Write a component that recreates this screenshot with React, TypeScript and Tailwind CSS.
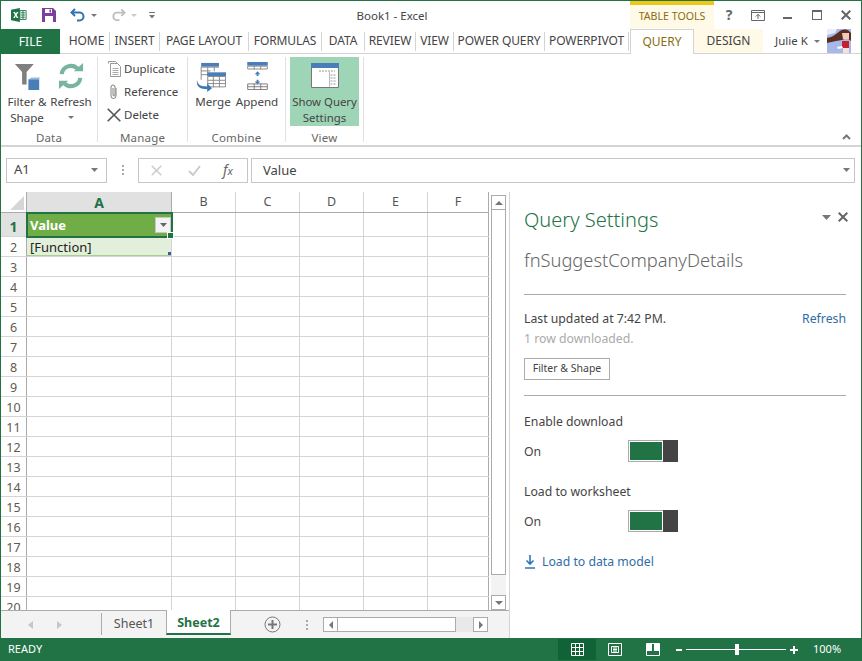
function Sep() {
  return <div className="w-px h-[19px] bg-[#d4d4d4]" />;
}

function Tab({ label, w, extra }: { label: string; w: string; extra?: string }) {
  return <div className={`${w} ${extra ?? ""} flex items-center justify-center h-full text-[#444] tracking-[-0.1px]`}>{label}</div>;
}

function ExcelLogo() {
  return (
    <svg width="18" height="16" viewBox="0 0 18 16">
      <path d="M10 3h7v10h-7z" fill="#fff" stroke="#217346" />
      <path d="M11 5.5h5M11 8h5M11 10.5h5M13.5 3v10" stroke="#217346" strokeWidth="1" />
      <path d="M0 2l10-2v16L0 14z" fill="#217346" />
      <path d="M2.5 4.5h2l1 2.2 1-2.2h1.9l-2 3.5 2 3.5H6.4l-1-2.3-1 2.3H2.5l2-3.5z" fill="#fff" />
    </svg>
  );
}

function TitleBar() {
  return (
    <div className="flex h-[28px] items-stretch">
      <div className="w-[10px]" />
      <div className="flex items-center w-[16px]"><ExcelLogo /></div>
      <div className="w-[15px]" />
      <div className="flex items-center">
        <svg width="14" height="14" viewBox="0 0 14 14">
          <path d="M0 0h11l3 3v11H0z" fill="#7a3f9e" />
          <path d="M3 1h7v4H3z" fill="#fff" />
          <path d="M3 8h8v6H3z" fill="#fff" />
          <path d="M7.5 1.5H9v3H7.5z" fill="#7a3f9e" />
        </svg>
      </div>
      <div className="w-[14px]" />
      <div className="flex items-center gap-[5px]">
        <svg width="16" height="14" viewBox="0 0 16 14" fill="none">
          <path d="M5 1L1.5 4.5 5 8" stroke="#2f75b5" strokeWidth="2" />
          <path d="M2 4.5h7.5a4 4 0 0 1 0 8H7" stroke="#2f75b5" strokeWidth="2" />
        </svg>
        <svg width="6" height="3" viewBox="0 0 6 3"><path d="M0 0h6L3 3z" fill="#777" /></svg>
      </div>
      <div className="w-[14px]" />
      <div className="flex items-center gap-[5px]">
        <svg width="15" height="14" viewBox="0 0 16 14" fill="none">
          <path d="M11 1l3.5 3.5L11 8" stroke="#bdbdbd" strokeWidth="2" />
          <path d="M14 4.5H6.5a4 4 0 0 0 0 8H9" stroke="#bdbdbd" strokeWidth="2" />
        </svg>
        <svg width="6" height="3" viewBox="0 0 6 3"><path d="M0 0h6L3 3z" fill="#c9c9c9" /></svg>
      </div>
      <div className="w-[12px]" />
      <div className="flex items-center">
        <svg width="6" height="7" viewBox="0 0 6 7"><path d="M0 0h6v1H0zM0 3h6L3 6.5z" fill="#777" /></svg>
      </div>
      <div className="w-[202px]" />
      <div className="w-[70px] flex items-center justify-center text-[#444] text-[11.5px] whitespace-nowrap pt-[2px]">Book1 - Excel</div>
      <div className="w-[203px]" />
      <div className="w-[84px] bg-[#fff9e7] border-t-[4px] border-[#eec717] flex items-center justify-center text-[#8a6d0f] text-[10.6px] whitespace-nowrap">TABLE TOOLS</div>
      <div className="flex-1 flex items-center">
        <div className="w-[10px]" />
        <span className="w-[10px] text-[#666] font-bold text-[14px] leading-none text-center">?</span>
        <div className="w-[17px]" />
        <svg width="14" height="11" viewBox="0 0 14 11" fill="none"><path d="M.5.5h13v10H.5zM1 2.5h12" stroke="#666" /><path d="M7 9V4.5M4.8 6.5L7 4.3l2.2 2.2" stroke="#666" /></svg>
        <div className="w-[18px]" />
        <div className="w-[9px] h-[2px] mt-[6px] bg-[#666]" />
        <div className="w-[20px]" />
        <div className="w-[10px] h-[10px] border border-t-2 border-[#666]" />
        <div className="w-[19px]" />
        <svg width="10" height="10" viewBox="0 0 10 10"><path d="M.7.7l8.6 8.6M9.3.7L.7 9.3" stroke="#666" strokeWidth="2" /></svg>
      </div>
    </div>
  );
}

function Avatar() {
  return (
    <svg width="24" height="24" viewBox="0 0 24 24" className="shrink-0">
      <rect width="24" height="24" fill="#a8b8ea" />
      <path d="M0 0h10L8 4 0 6z" fill="#e8ecfa" />
      <path d="M0 9c6-1 9-4 13-7 3-2 7-2 9 0l2 2v8l-4-3-5 2-6 1-9 2z" fill="#5a2f22" />
      <path d="M15 4h7v6h-6z" fill="#f2cdb4" />
      <path d="M15 12h7v7h-7z" fill="#c8202a" />
      <path d="M16 19h6v5h-6z" fill="#f4e3dc" />
      <path d="M10 18l5-1 1 2-5 1z" fill="#fff" />
    </svg>
  );
}

function TabStrip() {
  return (
    <div className="flex h-[25px] items-stretch border-b border-[#d4d4d4]">
      <div className="w-[59px] bg-[#217346] text-white flex items-center justify-center mb-[-1px]">FILE</div>
      <div className="flex items-center">
        <Tab label="HOME" w="w-[49px]" extra="pl-[4px]" />
        <Sep />
        <Tab label="INSERT" w="w-[49px]" />
        <Sep />
        <Tab label="PAGE LAYOUT" w="w-[88px]" />
        <Sep />
        <Tab label="FORMULAS" w="w-[72px]" />
        <Sep />
        <Tab label="DATA" w="w-[42px]" />
        <Sep />
        <Tab label="REVIEW" w="w-[50px]" />
        <Sep />
        <Tab label="VIEW" w="w-[37px]" />
        <Sep />
        <Tab label="POWER QUERY" w="w-[90px]" />
        <Sep />
        <Tab label="POWERPIVOT" w="w-[83px]" />
        <Sep />
      </div>
      <div className="w-[1px]" />
      <div className="w-[64px] border border-b-0 border-[#d4d4d4] bg-white mb-[-1px] flex items-center justify-center text-[#8a6d0f]">QUERY</div>
      <div className="w-[69px] bg-[#fff9e7] flex items-center justify-center text-[#444]">DESIGN</div>
      <div className="w-[12px]" />
      <div className="w-[33px] flex items-center text-[#444] text-[11.5px] whitespace-nowrap">Julie K</div>
      <div className="w-[12px] flex items-center justify-end">
        <svg width="6" height="3" viewBox="0 0 6 3"><path d="M0 0h6L3 3z" fill="#777" /></svg>
      </div>
      <div className="w-[7px]" />
      <Avatar />
    </div>
  );
}

function Group({ label, w, children }: { label: string; w: string; children: React.ReactNode }) {
  return (
    <div className={`${w} flex flex-col border-r border-[#e1e1e1] mt-[3px] mb-[3px]`}>
      <div className="flex-1 flex min-h-0">{children}</div>
      <div className="h-[16px] -mb-[4px] shrink-0 flex items-center justify-center text-[#666] text-[11.5px] tracking-[0.2px]">{label}</div>
    </div>
  );
}

function MenuRow({ icon, label }: { icon: React.ReactNode; label: string }) {
  return (
    <div className="h-[23px] shrink-0 flex items-center text-[#444] text-[11.5px]">
      <div className="w-[18px] flex justify-center">{icon}</div>
      <span className="ml-[1px]">{label}</span>
    </div>
  );
}

function Ribbon() {
  return (
    <div className="h-[93px] flex border-b-2 border-[#d4d4d4] bg-white text-[11.6px]">
      <Group label="Data" w="w-[97px]">
        <div className="w-[50px] flex flex-col items-center text-[#444] leading-[16px] pl-[2px]">
          <svg width="27" height="27" viewBox="0 0 30 30" className="mt-[6px] shrink-0">
            <path d="M1 1h21l-8 9v14h-5V10z" fill="#7f7f7f" />
            <path d="M16 18h12v12H16z" fill="#4a7eb8" />
            <path d="M19 16h10l-1 2H17z" fill="#9dbbdd" />
          </svg>
          <div className="mt-[4px] text-center whitespace-nowrap">Filter &amp;<br />Shape</div>
        </div>
        <div className="w-[40px] flex flex-col items-center text-[#444] leading-[16px]">
          <svg width="26" height="26" viewBox="0 0 28 28" fill="none" className="mt-[6px] shrink-0">
            <path d="M4 12a10 10 0 0 1 17-6" stroke="#77b59e" strokeWidth="4.5" />
            <path d="M17 9h10V0z" fill="#77b59e" />
            <path d="M24 16a10 10 0 0 1-17 6" stroke="#77b59e" strokeWidth="4.5" />
            <path d="M11 19H1v9z" fill="#77b59e" />
          </svg>
          <div className="mt-[5px] whitespace-nowrap">Refresh</div>
          <svg width="6" height="3" viewBox="0 0 6 3" className="mt-[6px] shrink-0"><path d="M0 0h6L3 3z" fill="#777" /></svg>
        </div>
      </Group>
      <Group label="Manage" w="w-[90px]">
        <div className="flex flex-col pl-[7px]">
          <MenuRow label="Duplicate" icon={
            <svg width="13" height="16" viewBox="0 0 13 16" fill="none"><path d="M.5 2.5V.5h7l3 3v1" stroke="#999" /><path d="M2.5 2.5h7l3 3v10h-10z" fill="#fff" stroke="#999" /><path d="M4.5 7.5h6M4.5 9.500h6M4.5 11.500h6M4.5 13.500h6" stroke="#aaa" /></svg>
          } />
          <MenuRow label="Reference" icon={
            <svg width="8" height="16" viewBox="0 0 8 16" fill="none"><path d="M6 4v8a2.500 2.500 0 0 1-5 0V3a2 2 0 0 1 4 0v8a1 1 0 0 1-2 0V4" stroke="#808080" /></svg>
          } />
          <MenuRow label="Delete" icon={
            <svg width="14" height="14" viewBox="0 0 14 14"><path d="M.7.7l12.600 12.600M13.300.7L.7 13.300" stroke="#555" strokeWidth="1.6" /></svg>
          } />
        </div>
      </Group>
      <Group label="Combine" w="w-[98px]">
        <div className="w-[48px] flex flex-col items-center text-[#444] leading-[16px] pl-[2px]">
          <svg width="30" height="30" viewBox="0 0 32 32" fill="none" className="mt-[5px] -ml-[4px] shrink-0">
            <path d="M5.5 1h19v4h-19z" fill="#4a7eb8" />
            <path d="M5.5 5.500h19M5.500 9.500h10M5.500 13.500h8M5.500 5v14M12.500 5v10M19.500 5v5" stroke="#888" />
            <path d="M12 11h20v4H12z" fill="#4a7eb8" />
            <path d="M12.5 15.500h19v11h-19zM12.500 19.500h19M12.500 23h19M18.500 15v12M25 15v12" stroke="#888" />
            <path d="M1 19c1 7 6 7 11 7v-3l5 5-5 4v-3C5 29 0 27 1 19z" fill="#3d77b6" />
          </svg>
          <div className="mt-[2px]">Merge</div>
        </div>
        <div className="w-[42px] flex flex-col items-center text-[#444] leading-[16px]">
          <svg width="21" height="28" viewBox="0 0 22 30" fill="none" className="mt-[5px] shrink-0">
            <path d="M0 0h22v4H0z" fill="#4a7eb8" />
            <path d="M.5 4.500h21v3H.5zM7.500 4v4M14.500 4v4" stroke="#888" />
            <path d="M11 10l3 3h-2v2h-2v-2H8zM11 24l3-3h-2v-2h-2v2H8z" fill="#4a7eb8" />
            <path d="M.5 23.500h21v6H.5zM.5 26.500h21M7.500 23v7M14.500 23v7" stroke="#777" />
          </svg>
          <div className="mt-[4px] whitespace-nowrap">Append</div>
        </div>
      </Group>
      <Group label="View" w="w-[78px]">
        <div className="w-[69px] h-[69px] ml-[4px] bg-[#9fd5b7] flex flex-col items-center text-[#444] leading-[16px]">
          <svg width="28" height="25" viewBox="0 0 28 25" fill="none" className="mt-[6px] shrink-0">
            <path d="M.5.5h27v24H.5z" fill="#fff" stroke="#777" />
            <path d="M0 0h28v5H0z" fill="#4a7eb8" />
            <path d="M8 8h16M19.500 12h6M19.500 15h6M19.500 18h6M19.500 21h6" stroke="#999" strokeDasharray="2 1" />
            <path d="M18.5 9v15" stroke="#bbb" />
          </svg>
          <div className="mt-[6px] text-center whitespace-nowrap text-[11.4px]">Show Query<br />Settings</div>
        </div>
      </Group>
      <div className="flex-1 flex items-end justify-end pb-[5px] pr-[10px]">
        <svg width="9" height="6" viewBox="0 0 9 6" fill="none"><path d="M1 5l3.5-3.500L8 5" stroke="#777" strokeWidth="2" /></svg>
      </div>
    </div>
  );
}

function FormulaBar() {
  return (
    <div className="h-[45px] flex items-center pl-[5px] pr-[6px] pt-[1px]">
      <div className="w-[101px] h-[25px] border border-[#c6c6c6] flex items-center justify-between pl-[7px] pr-[8px] text-[#444] text-[13px]">
        <span>A1</span>
        <svg width="7" height="4" viewBox="0 0 7 4"><path d="M0 0h7L3.5 4z" fill="#777" /></svg>
      </div>
      <div className="w-[31px] flex flex-col items-center gap-[2px]">
        <div className="w-[2px] h-[2px] bg-[#aaa]" />
        <div className="w-[2px] h-[2px] bg-[#aaa]" />
        <div className="w-[2px] h-[2px] bg-[#aaa]" />
      </div>
      <div className="w-[110px] h-[25px] border border-[#c6c6c6] flex items-center">
        <svg width="11" height="11" viewBox="0 0 11 11" className="ml-[12px]"><path d="M.7.7l9.600 9.600M10.300.7L.7 10.300" stroke="#ccc" strokeWidth="1.6" /></svg>
        <svg width="13" height="11" viewBox="0 0 13 11" fill="none" className="ml-[26px]"><path d="M1 6l4 4 7-9" stroke="#ccc" strokeWidth="2" /></svg>
        <span className="ml-[22px] text-[#666] text-[14px] italic font-['Liberation_Serif',serif] leading-none">f<span className="text-[11px]">x</span></span>
      </div>
      <div className="w-[3px]" />
      <div className="flex-1 h-[25px] border border-[#c6c6c6] flex items-center justify-between pl-[11px] pr-[4px] text-[#444] text-[13px]">
        <span className="pt-[1px]">Value</span>
        <svg width="7" height="4" viewBox="0 0 7 4"><path d="M0 0h7L3.5 4z" fill="#777" /></svg>
      </div>
    </div>
  );
}

const otherCols = [
  { label: "B", cls: "w-[64px] border-[#d4d4d4]" },
  { label: "C", cls: "w-[64px] border-[#d4d4d4]" },
  { label: "D", cls: "w-[64px] border-[#d4d4d4]" },
  { label: "E", cls: "w-[64px] border-[#d4d4d4]" },
  { label: "F", cls: "w-[61px] border-[#ababab]" },
];

function Row({ n }: { n: number }) {
  return (
    <div className="flex h-[20px] shrink-0 border-b border-[#d4d4d4]">
      <div className="w-[26px] bg-white border-r border-[#ababab] flex items-center justify-center pt-[3px] text-[12.5px] text-[#5f5a4e]">
        {n}
      </div>
      <div className={`w-[145px] border-r border-[#d4d4d4] ${n === 2 ? "bg-[#e2efda] border-b border-b-[#a9d08e] relative flex items-center pl-[3px] pt-[3px] text-[13px] text-[#222]" : ""}`}>
        {n === 2 && "[Function]"}
        {n === 2 && <div className="absolute right-0 bottom-0 w-[3px] h-[3px] bg-[#3a58a8]" />}
      </div>
      {otherCols.map((c) => (
        <div key={c.label} className={`${c.cls} border-r`} />
      ))}
    </div>
  );
}

function Sheet() {
  const rows = [];
  for (let i = 2; i <= 20; i++) rows.push(i);
  return (
    <div className="flex-1 flex flex-col min-h-0 overflow-hidden">
      <div className="flex h-[21px] shrink-0 border-b border-[#ababab]">
        <div className="w-[26px] bg-white border-r border-[#ababab] flex items-end justify-end p-[2px]">
          <svg width="14" height="14" viewBox="0 0 14 14"><path d="M14 0v14H0z" fill="#d6d6d6" /></svg>
        </div>
        <div className="w-[145px] bg-[#e1e1e1] border-r border-[#ababab] flex items-center justify-center font-bold text-[#217346] text-[14px]">A</div>
        {otherCols.map((c) => (
          <div key={c.label} className={`${c.cls} border-r flex items-center justify-center text-[#555] text-[12.5px]`}>{c.label}</div>
        ))}
      </div>
      <div className="flex h-[24px] shrink-0 border-b border-[#d4d4d4]">
        <div className="w-[26px] bg-[#e1e1e1] border-r border-[#ababab] flex items-center justify-center pt-[3px] font-bold text-[#217346] text-[14px]">1</div>
        <div className="w-[147px] h-[26px] relative z-10 bg-[#70ad47] border-2 border-[#217346] flex items-center justify-between text-white font-bold text-[13px] pl-[2px] ml-[-1px] mt-[-1px]">
          <span className="pt-[1px]">Value</span>
          <div className="w-[16px] h-[16px] bg-[#f3f3f3] border border-[#c6c6c6] flex items-center justify-center">
            <svg width="7" height="4" viewBox="0 0 7 4"><path d="M0 0h7L3.5 4z" fill="#666" /></svg>
          </div>
          <div className="absolute right-[-3px] bottom-[-3px] w-[5px] h-[5px] bg-[#217346] border border-white box-content" />
        </div>
        {otherCols.map((c) => (
          <div key={c.label} className={`${c.cls} border-r ${c.label === "B" ? "ml-[-1px]" : ""}`} />
        ))}
      </div>
      {rows.map((n) => (
        <Row key={n} n={n} />
      ))}
    </div>
  );
}

function VScroll() {
  return (
    <div className="w-[15px] pt-[3px] flex flex-col">
      <div className="h-[15px] shrink-0 bg-white border border-[#ababab] flex items-center justify-center">
        <svg width="8" height="4" viewBox="0 0 8 4"><path d="M4 0l4 4H0z" fill="#777" /></svg>
      </div>
      <div className="h-[365px] shrink-0 bg-white border border-t-0 border-[#ababab]" />
      <div className="flex-1 bg-[#f3f3f3]" />
      <div className="h-[15px] shrink-0 bg-white border border-[#ababab] flex items-center justify-center">
        <svg width="8" height="4" viewBox="0 0 8 4"><path d="M0 0h8L4 4z" fill="#777" /></svg>
      </div>
    </div>
  );
}

function SheetTabs() {
  return (
    <div className="h-[28px] shrink-0 bg-[#f3f3f3] border-t border-[#ababab] flex items-stretch">
      <div className="w-[100px] flex items-center pl-[27px] gap-[24px]">
        <svg width="5" height="8" viewBox="0 0 5 8"><path d="M5 0v8L0 4z" fill="#c6c6c6" /></svg>
        <svg width="5" height="8" viewBox="0 0 5 8"><path d="M0 0v8l5-4z" fill="#c6c6c6" /></svg>
      </div>
      <div className="w-[65px] border-l border-[#ababab] mt-[2px] mb-[3px] pt-[1px] flex items-center justify-center text-[#555] text-[12.5px]">Sheet1</div>
      <div className="w-[65px] mt-[-1px] mb-[3px] pt-[3px] bg-white border-x border-[#ababab] border-b-2 border-b-[#217346] flex items-center justify-center font-bold text-[#217346] text-[12.5px]">Sheet2</div>
      <div className="w-[33px]" />
      <div className="flex items-center">
        <svg width="17" height="17" viewBox="0 0 17 17" fill="none"><circle cx="8.5" cy="8.5" r="7.5" stroke="#777" /><path d="M8.5 4v9M4 8.5h9" stroke="#777" strokeWidth="2" /></svg>
      </div>
      <div className="w-[19px]" />
      <div className="w-[10px] flex flex-col items-center justify-center gap-[2px] ml-[2px]">
        <div className="w-[2px] h-[2px] bg-[#aaa]" />
        <div className="w-[2px] h-[2px] bg-[#aaa]" />
        <div className="w-[2px] h-[2px] bg-[#aaa]" />
      </div>
      <div className="w-[11px]" />
      <div className="flex items-center">
        <div className="w-[15px] h-[15px] bg-white border border-[#ababab] flex items-center justify-center">
          <svg width="4" height="8" viewBox="0 0 4 8"><path d="M4 0v8L0 4z" fill="#777" /></svg>
        </div>
        <div className="w-[118px] h-[15px] bg-white border border-l-0 border-[#ababab]" />
        <div className="w-[17px] h-[15px] bg-[#e9e9e9]" />
        <div className="w-[15px] h-[15px] bg-white border border-[#ababab] flex items-center justify-center">
          <svg width="4" height="8" viewBox="0 0 4 8"><path d="M0 0v8l4-4z" fill="#777" /></svg>
        </div>
      </div>
    </div>
  );
}

function Toggle() {
  return (
    <div className="w-[50px] h-[22px] border border-[#ababab] flex">
      <div className="flex-1 m-px bg-[#217346]" />
      <div className="w-[15px] bg-[#444] my-[-1px] mr-[-1px]" />
    </div>
  );
}

function QueryPanel() {
  return (
    <div className="flex-1 flex flex-col pl-[14px] pr-[15px] text-[#444] text-[12.25px]">
      <div className="flex items-start justify-between h-[48px] pt-[13px]">
        <div className="text-[20px] leading-[30px] text-[#217346] font-light">Query Settings</div>
        <div className="flex items-center gap-[7px] pt-[7px] -mr-[2px]">
          <svg width="9" height="5" viewBox="0 0 9 5"><path d="M0 0h9L4.5 5z" fill="#777" /></svg>
          <svg width="10" height="10" viewBox="0 0 10 10"><path d="M.7.7l8.6 8.6M9.3.7L.7 9.3" stroke="#666" strokeWidth="2" /></svg>
        </div>
      </div>
      <div className="text-[18.3px] leading-[28px] text-[#666] font-light h-[55px] pt-[6px] border-b border-[#ababab]">fnSuggestCompanyDetails</div>
      <div className="flex justify-between mt-[14px] leading-[20px]">
        <span>Last updated at 7:42 PM.</span>
        <span className="text-[#2f6ea6]">Refresh</span>
      </div>
      <div className="text-[#aaa] leading-[20px]">1 row downloaded.</div>
      <div className="mt-[9px] w-[86px] h-[22px] border border-[#ababab] flex items-center justify-center text-[10.5px]">Filter &amp; Shape</div>
      <div className="mt-[15px] border-b border-[#ababab]" />
      <div className="mt-[16px] leading-[20px]">Enable download</div>
      <div className="flex items-center mt-[8px] h-[22px]">
        <span className="w-[104px] pt-[2px]">On</span>
        <Toggle />
      </div>
      <div className="mt-[20px] leading-[20px]">Load to worksheet</div>
      <div className="flex items-center mt-[8px] h-[22px]">
        <span className="w-[104px] pt-[2px]">On</span>
        <Toggle />
      </div>
      <div className="flex items-center mt-[20px] h-[20px] text-[#2f6ea6]">
        <svg width="10" height="14" viewBox="0 0 10 14" fill="none" className="ml-[1px] mr-[7px]"><path d="M5 0v9M1.5 5.500L5 9l3.500-3.500M0 13h10" stroke="#2f75b5" strokeWidth="1.6" /></svg>
        Load to data model
      </div>
    </div>
  );
}

function StatusBar() {
  return (
    <div className="h-[23px] bg-[#217346] text-white flex items-center text-[11px] -mx-px">
      <div className="pl-[8px] w-[558px]">READY</div>
      <div className="w-[38px] h-[21px] bg-[#0f6337] flex items-center justify-center">
        <svg width="13" height="13" viewBox="0 0 13 13" fill="none"><path d="M.5.5h12v12H.5zM.5 4.500h12M.5 8.500h12M4.500 0v13M8.500 0v13" stroke="#fff" /></svg>
      </div>
      <div className="w-[38px] flex justify-center">
        <svg width="14" height="13" viewBox="0 0 14 13" fill="none"><path d="M.5.5h13v12H.5zM3.500 3.500h7v6h-7zM5 5h4M5 6.500h4M5 8h4" stroke="#fff" /></svg>
      </div>
      <div className="w-[38px] flex justify-center">
        <svg width="14" height="13" viewBox="0 0 14 13" fill="none"><path d="M.5.5h13v12H.5z" stroke="#fff" /><path d="M1 1h5v7H1zM8 1h5v7H8z" fill="#fff" /></svg>
      </div>
      <div className="w-[4px]" />
      <div className="w-[6px] h-[2px] bg-white" />
      <div className="w-[4px]" />
      <div className="w-[100px] h-px bg-white relative">
        <div className="absolute left-[49px] top-[-5px] w-[4px] h-[11px] bg-white" />
      </div>
      <div className="w-[4px]" />
      <svg width="8" height="8" viewBox="0 0 8 8"><path d="M3 0h2v3h3v2H5v3H3V5H0V3h3z" fill="#fff" /></svg>
      <div className="w-[15px]" />
      <div className="text-[11px]">100%</div>
    </div>
  );
}

export default function App() {
  return (
    <div className="w-[862px] h-[661px] bg-white border-x border-t border-[#217346] flex flex-col overflow-hidden text-[12px] font-['Open_Sans',sans-serif]">
      <TitleBar />
      <TabStrip />
      <Ribbon />
      <FormulaBar />
      <div className="flex-1 flex min-h-0">
        <div className="w-[509px] flex flex-col border-r border-[#d4d4d4] min-h-0">
          <div className="flex-1 flex gap-[2px] min-h-0">
            <div className="w-[488px] flex flex-col min-h-0"><Sheet /></div>
            <VScroll />
          </div>
          <SheetTabs />
        </div>
        <QueryPanel />
      </div>
      <StatusBar />
    </div>
  );
}
